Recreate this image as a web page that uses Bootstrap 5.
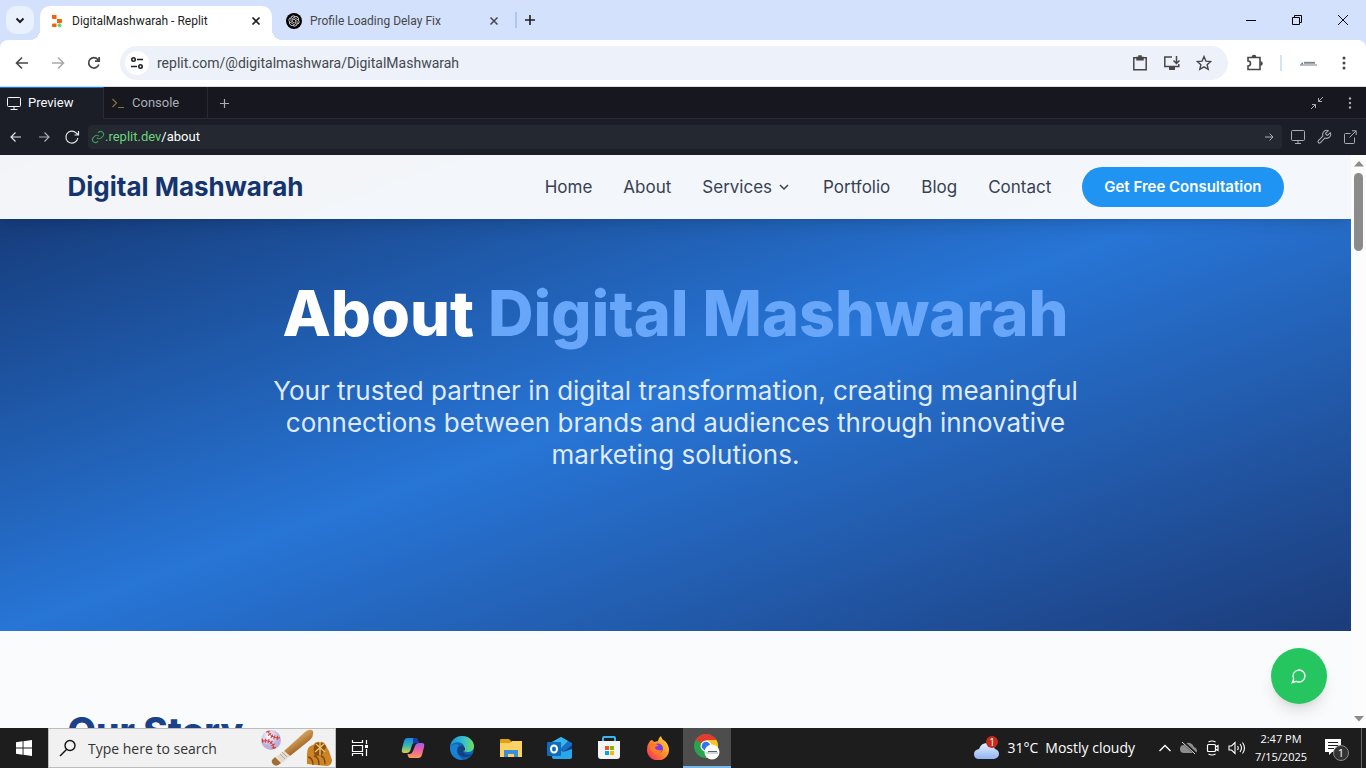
<!DOCTYPE html>
<html lang="en">
<head>
<meta charset="utf-8">
<meta name="viewport" content="width=device-width, initial-scale=1">
<title>DigitalMashwarah - Replit</title>
<link href="https://cdn.jsdelivr.net/npm/bootstrap@5.3.0/dist/css/bootstrap.min.css" rel="stylesheet">
<style>
  :root { --ui: "Open Sans", "Noto Sans", sans-serif; --site: Inter, "Open Sans", sans-serif; --ide: Roboto, "Liberation Sans", sans-serif; }
  body { font-family: var(--ui); }
  svg { display: block; flex: none; }
  .plain-btn { border: 0; background: none; padding: 0; color: inherit; display: flex; align-items: center; justify-content: center; flex: none; }
  .stroke { fill: none; stroke: currentColor; }

  .tab-strip { height: 40px; background: #d3e1fd; color: #1f1f1f; font: 12px/20px var(--ide); }
  .tab-search { width: 28px; height: 28px; border-radius: 10px; background: #e9f0fe; margin: 0 6px; }
  .browser-tab { height: 34px; position: relative; margin-top: 6px; }
  .tab-active { width: 232px; background: #fff; border-radius: 10px 10px 0 0; padding: 0 8px 5px 10px; }
  .tab-active::before, .tab-active::after { content: ""; position: absolute; bottom: 0; width: 10px; height: 10px; }
  .tab-active::before { left: -10px; background: radial-gradient(circle at 0 0, transparent 10px, #fff 10px); }
  .tab-active::after { right: -10px; background: radial-gradient(circle at 100% 0, transparent 10px, #fff 10px); }
  .tab-idle { width: 230px; padding: 0 0 5px 14px; color: #474747; }
  .tab-rule { width: 2px; height: 16px; background: #a8c7fa; margin: 0 5px 0 13px; }
  .win-btn { width: 46px; height: 40px; color: #000; }

  .toolbar-wrap { background: #d3e1fd; }
  .browser-bar { height: 47px; background: #fff; border-radius: 8px 8px 0 0; border-bottom: 1px solid #dcdcdc; color: #474747; }
  .nav-btn { width: 36px; height: 34px; }
  .nav-btn:disabled { color: #aaa; }
  .omnibox { height: 34px; border-radius: 17px; background: #ecf1fa; padding: 0 16px 0 5px; }
  .site-info { width: 24px; height: 24px; border-radius: 50%; background: #fff; color: #1f1f1f; }
  .field { border: 0; background: none; outline: 0; padding: 0; min-width: 0; }
  .url-field { font: 14px/20px var(--ide); color: #45484d; margin-left: 8px; }
  .bar-rule { width: 2px; height: 16px; background: #d3e3fd; }

  .ide-tabs { height: 32px; background: #171720; border-bottom: 1px solid #272b35; font: 13px/16px var(--ide); color: #a9adb7; }
  .ide-tab { height: 31px; width: 104px; border-right: 1px solid #272b35; padding-left: 7px; gap: 7px; }
  .ide-tab.selected { height: 32px; background: #1b1d27; border-top: 1px solid #0079f2; color: #f5f9fc; padding-bottom: 2px; }
  .ide-bar { height: 36px; background: #1b1d27; font: 13px/16px var(--ide); color: #a9adb7; }
  .ide-url { height: 24px; border-radius: 4px; background: #242830; padding: 0 6px 0 3px; }
  .ide-host { color: #6bd47c; }
  .ide-link-icon { color: #3d9a58; }
  .ide-btn { width: 28px; height: 24px; }
  .ide-lit { color: #e3e6ea; }
  .ide-tools { padding: 0 3px; }
  .ide-tools .ide-btn { width: 26px; }
  .ide-prompt { color: #837340; }

  .site-frame { min-height: 0; background: #fafbfd; font-family: var(--site); }
  .site-page { min-width: 0; }
  .site-wrap { width: 100%; max-width: 1280px; margin: 0 auto; padding: 0 32px; }
  .site-head { position: relative; z-index: 2; height: 64px; background: rgba(255,255,255,.95); box-shadow: 0 10px 15px -3px rgba(0,0,0,.1), 0 4px 6px -4px rgba(0,0,0,.1); }
  .site-logo { font-size: 26px; line-height: 32px; font-weight: 700; color: #14346e; text-decoration: none; }
  .site-nav { gap: 31px; font-size: 17px; line-height: 24px; }
  .site-nav a { color: #374151; text-decoration: none; }
  .cta { height: 40px; padding: 0 22px; background: #2094f3; color: #fff; border: 0; font-size: 15px; line-height: 20px; font-weight: 600; }
  .hero { margin-top: -64px; padding: 128px 0 160px; background: linear-gradient(to bottom right, #14346e, #2775d6, #1c3c7a); color: #fff; text-align: center; }
  .hero h1 { font-size: 63px; line-height: 60px; font-weight: 800; margin: 0 0 32px; }
  .hero h1 span { color: #68a6fa; }
  .hero p { max-width: 820px; margin: 0 auto; font-size: 26px; line-height: 32px; color: #dfeafc; }
  .story { padding-top: 80px; }
  .story h2 { font-size: 37px; line-height: 40px; font-weight: 800; color: #1a428a; margin: 0; }
  .chat-btn { position: absolute; right: 24px; bottom: 24px; width: 56px; height: 56px; border-radius: 50%; background: #25c660; color: #fff; box-shadow: 0 10px 15px -3px rgba(0,0,0,.12), 0 4px 6px -4px rgba(0,0,0,.1); }
  .scroll-rail { width: 15px; background: #fcfcfc; padding: 6px 0; color: #8b8b8b; }
  .scroll-thumb { width: 9px; height: 78px; margin-top: 6px; border-radius: 5px; background: #8b8b8b; }

  .taskbar { height: 40px; background: #1d1d1d; color: #fff; }
  .task-list { gap: 1px; }
  .task-cell { width: 48px; height: 40px; }
  .search-cell { width: 288px; height: 40px; background: #f1f1f1; border: 1px solid #bdbdbd; padding-left: 10px; color: #111; }
  .search-cell input { font-size: 14px; color: #333; margin-left: 11px; width: 160px; }
  .search-cell input::placeholder { color: #333; opacity: 1; }
  .task-on { background: #4d4d4d; border-bottom: 2px solid #76b9ed; }
  .weather { font-size: 14px; line-height: 20px; gap: 7px; margin-right: 18px; }
  .clock { width: 64px; font-size: 11px; line-height: 18px; text-align: center; white-space: nowrap; }
  .tray-cell { width: 24px; }
  .desk-edge { width: 5px; height: 40px; border-left: 1px solid #666; }
</style>
</head>
<body class="vh-100 overflow-hidden d-flex flex-column">

<!-- Browser tabs -->
<header class="tab-strip d-flex align-items-center flex-shrink-0">
  <button class="plain-btn tab-search" aria-label="Search tabs"><svg width="12" height="12" class="stroke" stroke-width="2"><path d="M2.500 4.500 6 8l3.500-3.500"/></svg></button>
  <div class="browser-tab tab-active d-flex align-items-center">
    <svg width="14" height="14" viewBox="0 0 14 14"><path fill="#f26207" d="M2 1h4.500v4H3a1 1 0 0 1-1-1zM7 5h4a1 1 0 0 1 1 1v2a1 1 0 0 1-1 1H7zM3 9.500h3.500V13H3a1 1 0 0 1-1-1v-1.500z"/><circle cx="9.500" cy="11.200" r="2" fill="#62d77b"/></svg>
    <span class="ms-2 text-nowrap">DigitalMashwarah - Replit</span>
    <button class="plain-btn ms-auto" aria-label="Close tab"><svg width="16" height="16" class="stroke" stroke-width="1.700"><path d="m4.500 4.500 7 7m0-7-7 7"/></svg></button>
  </div>
  <div class="browser-tab tab-idle d-flex align-items-center">
    <svg width="16" height="16" viewBox="0 0 16 16"><circle cx="8" cy="8" r="8"/><path fill="#fff" transform="translate(2.500 2.500) scale(.46)" d="M22.2819 9.8211a5.9847 5.9847 0 0 0-.5157-4.9108 6.0462 6.0462 0 0 0-6.5098-2.9A6.0651 6.0651 0 0 0 4.9807 4.1818a5.9847 5.9847 0 0 0-3.9977 2.9 6.0462 6.0462 0 0 0 .7427 7.0966 5.98 5.98 0 0 0 .511 4.9107 6.051 6.051 0 0 0 6.5146 2.9001A5.9847 5.9847 0 0 0 13.2599 24a6.0557 6.0557 0 0 0 5.7718-4.2058 5.9894 5.9894 0 0 0 3.9977-2.9001 6.0557 6.0557 0 0 0-.7475-7.0729zm-9.022 12.6081a4.4755 4.4755 0 0 1-2.8764-1.0408l.1419-.0804 4.7783-2.7582a.7948.7948 0 0 0 .3927-.6813v-6.7369l2.02 1.1686a.071.071 0 0 1 .038.052v5.5826a4.504 4.504 0 0 1-4.4945 4.4944zm-9.6607-4.1254a4.4708 4.4708 0 0 1-.5346-3.0137l.142.0852 4.783 2.7582a.7712.7712 0 0 0 .7806 0l5.8428-3.3685v2.3324a.0804.0804 0 0 1-.0332.0615L9.74 19.9502a4.4992 4.4992 0 0 1-6.1408-1.6464zM2.3408 7.8956a4.485 4.485 0 0 1 2.3655-1.9728V11.6a.7664.7664 0 0 0 .3879.6765l5.8144 3.3543-2.0201 1.1685a.0757.0757 0 0 1-.071 0l-4.8303-2.7865A4.504 4.504 0 0 1 2.3408 7.872zm16.5963 3.8558L13.1038 8.364 15.1192 7.2a.0757.0757 0 0 1 .071 0l4.8303 2.7913a4.4944 4.4944 0 0 1-.6765 8.1042v-5.6772a.79.79 0 0 0-.407-.667zm2.0107-3.0231l-.142-.0852-4.7735-2.7818a.7759.7759 0 0 0-.7854 0L9.409 9.2297V6.8974a.0662.0662 0 0 1 .0284-.0615l4.8303-2.7866a4.4992 4.4992 0 0 1 6.6802 4.66zM8.3065 12.863l-2.02-1.1638a.0804.0804 0 0 1-.038-.0567V6.0742a4.4992 4.4992 0 0 1 7.3757-3.4537l-.142.0805L8.704 5.459a.7948.7948 0 0 0-.3927.6813zm1.0976-2.3654l2.602-1.4998 2.6069 1.4998v2.9994l-2.5974 1.4997-2.6067-1.4997Z"/></svg>
    <span class="ms-2 text-nowrap">Profile Loading Delay Fix</span>
    <button class="plain-btn ms-auto" aria-label="Close tab"><svg width="16" height="16" class="stroke" stroke-width="1.500"><path d="m4.500 4.500 7 7m0-7-7 7"/></svg></button>
  </div>
  <span class="tab-rule"></span>
  <button class="plain-btn" aria-label="New tab"><svg width="16" height="16" class="stroke" stroke-width="1.600"><path d="M8 3v10M3 8h10"/></svg></button>
  <div class="d-flex ms-auto">
    <button class="plain-btn win-btn" aria-label="Minimize"><svg width="12" height="12" class="stroke"><path d="M1 6.500h10"/></svg></button>
    <button class="plain-btn win-btn" aria-label="Restore"><svg width="12" height="12" class="stroke"><path d="M1.500 3.500h7v7h-7zM3.500 3.500v-2h7v7h-2"/></svg></button>
    <button class="plain-btn win-btn" aria-label="Close"><svg width="12" height="12" class="stroke"><path d="m1 1 10 10m0-10L1 11"/></svg></button>
  </div>
</header>

<!-- Browser toolbar -->
<div class="toolbar-wrap flex-shrink-0">
<div class="browser-bar d-flex align-items-center ps-1">
  <button class="plain-btn nav-btn" aria-label="Back"><svg width="16" height="16" class="stroke" stroke-width="1.600"><path d="M14 8H3M8 2.500 2.500 8 8 13.500"/></svg></button>
  <button class="plain-btn nav-btn" aria-label="Forward" disabled><svg width="16" height="16" class="stroke" stroke-width="1.600"><path d="M2 8h11M8 2.500 13.500 8 8 13.500"/></svg></button>
  <button class="plain-btn nav-btn" aria-label="Reload"><svg width="16" height="16" class="stroke" stroke-width="1.700"><path d="M12.800 9.500A5.200 5.200 0 1 1 11.900 4.500L13 6M13.200 2v4.200H9"/></svg></button>
  <div class="omnibox d-flex align-items-center flex-grow-1 ms-2">
    <button class="plain-btn site-info" aria-label="Site information"><svg width="14" height="14" class="stroke" stroke-width="1.600"><circle cx="3.500" cy="3.500" r="1.700"/><path d="M7 3.500h6M1 10.500h6"/><circle cx="10.500" cy="10.500" r="1.700"/></svg></button>
    <input class="field url-field flex-grow-1" aria-label="Address" value="replit.com/@digitalmashwara/DigitalMashwarah">
    <div class="d-flex gap-3 align-items-center">
      <button class="plain-btn" aria-label="Clipboard"><svg width="16" height="16" class="stroke" stroke-width="1.500"><path d="M1.800 2.800h12.400v12H1.800z"/><path fill="currentColor" d="M5 2.500h6v2.300H5zM7 1h2v2H7z"/></svg></button>
      <button class="plain-btn" aria-label="Install app"><svg width="16" height="16" viewBox="1 0 16 16" class="stroke" stroke-width="1.500"><path d="M9 2H1.800v9.500h14V9M13.500 1v7M10.500 5.500l3 3 3-3"/><path d="M6 13.500h6" stroke-width="3"/></svg></button>
      <button class="plain-btn" aria-label="Bookmark this page"><svg width="16" height="16" class="stroke" stroke-width="1.400"><path d="m8 1.600 1.900 4.500 4.800.4-3.600 3.200 1.100 4.700L8 11.900l-4.200 2.500 1.100-4.700-3.600-3.200 4.800-.4z"/></svg></button>
    </div>
  </div>
  <button class="plain-btn ms-3" aria-label="Extensions"><svg width="20" height="18" class="stroke" stroke-width="1.600"><path d="M4 3.500h12v12H4v-3.500a2.300 2.300 0 0 0 0-5z"/><path d="M8.500 3a1.500 1.500 0 0 1 3 0M16.500 8a1.500 1.500 0 0 1 0 3" fill="currentColor"/></svg></button>
  <span class="bar-rule mx-3"></span>
  <button class="plain-btn" aria-label="Profile"><svg width="20" height="16"><path d="M2 9.500 5 7v3z" fill="#5f7f9a"/><path d="M6 7.500h11M2 10h17" stroke="#a3aab2" stroke-width="1.600"/><path d="M6 8h11" stroke="#5b6470"/></svg></button>
  <button class="plain-btn mx-3" aria-label="Browser menu"><svg width="16" height="16" fill="currentColor"><circle cx="10" cy="3" r="1.500"/><circle cx="10" cy="8" r="1.500"/><circle cx="10" cy="13" r="1.500"/></svg></button>
</div>
</div>

<!-- Workspace panes -->
<div class="ide-tabs d-flex flex-shrink-0">
  <button class="plain-btn ide-tab selected justify-content-start"><svg width="14" height="14" class="stroke"><path d="M1.500 1.500h11a1 1 0 0 1 1 1v7a1 1 0 0 1-1 1h-11a1 1 0 0 1-1-1v-7a1 1 0 0 1 1-1zM7 10.500v3M3.500 13.500h7"/></svg>Preview</button>
  <button class="plain-btn ide-tab justify-content-start"><svg width="14" height="12" class="stroke ide-prompt" stroke-width="1.200"><path d="m1.500 2 4 4-4 4M7 10.500h6"/></svg>Console</button>
  <button class="plain-btn ms-2" aria-label="New pane"><svg width="16" height="16" class="stroke" stroke-width="1.200"><path d="M8.500 4v9M4 8.500h9"/></svg></button>
  <button class="plain-btn ms-auto" aria-label="Collapse"><svg width="14" height="14" class="stroke"><path d="M13 1 8.500 5.500M8.500 2v3.500H12M1 13l4.500-4.500M2 8.500h3.500V12"/></svg></button>
  <button class="plain-btn ms-3 me-2" aria-label="Pane menu"><svg width="18" height="14" fill="currentColor"><circle cx="10" cy="2.500" r="1.200"/><circle cx="10" cy="7" r="1.200"/><circle cx="10" cy="11.500" r="1.200"/></svg></button>
</div>
<div class="ide-bar d-flex align-items-center flex-shrink-0">
  <button class="plain-btn ide-btn ide-lit ps-1" aria-label="Back"><svg width="12" height="12" class="stroke" stroke-width="1.200"><path d="M11 6H1m4.500-4.500L1 6l4.500 4.500"/></svg></button>
  <button class="plain-btn ide-btn ps-1" aria-label="Forward"><svg width="12" height="12" class="stroke" stroke-width="1.200"><path d="M1 6h10M6.500 1.500 11 6l-4.500 4.500"/></svg></button>
  <button class="plain-btn ide-btn ide-lit ps-1" aria-label="Reload"><svg width="16" height="16" class="stroke" stroke-width="1.200"><path d="M13.800 9A6 6 0 1 1 12 3.800L14.500 6M14.500 2v4h-4"/></svg></button>
  <div class="ide-url d-flex align-items-center flex-grow-1 ms-1">
    <svg width="14" height="14" viewBox="0 0 24 24" class="stroke ide-link-icon" stroke-width="2"><path d="M10 13a5 5 0 0 0 7.500.5l3-3a5 5 0 0 0-7-7L12 5M14 11a5 5 0 0 0-7.500-.5l-3 3a5 5 0 0 0 7 7L12 19"/></svg>
    <a class="text-decoration-none text-white flex-grow-1" href="#"><span class="ide-host">.replit.dev</span>/about</a>
    <button class="plain-btn" aria-label="Go"><svg width="14" height="12" class="stroke"><path d="M3 6h8M7.500 2.500 11 6 7.500 9.500"/></svg></button>
  </div>
  <div class="ide-tools d-flex">
    <button class="plain-btn ide-btn" aria-label="Device size"><svg width="16" height="14" class="stroke"><path d="M2.500.5h11a1 1 0 0 1 1 1v8a1 1 0 0 1-1 1h-11a1 1 0 0 1-1-1v-8a1 1 0 0 1 1-1zM8 10.500v3M5 13.500h6"/></svg></button>
    <button class="plain-btn ide-btn" aria-label="Tools"><svg width="16" height="16" viewBox="0 0 24 24" class="stroke" stroke-width="1.600"><path d="M14.700 6.300a1 1 0 0 0 0 1.400l1.600 1.600a1 1 0 0 0 1.400 0l3.770-3.770a6 6 0 0 1-7.940 7.940l-6.910 6.910a2.120 2.120 0 0 1-3-3l6.910-6.910a6 6 0 0 1 7.940-7.940z"/></svg></button>
    <button class="plain-btn ide-btn" aria-label="Open in new tab"><svg width="14" height="14" class="stroke"><path d="M11.500 7.500v5a1 1 0 0 1-1 1h-8a1 1 0 0 1-1-1v-8a1 1 0 0 1 1-1h5M9 .8h4.200V5M13 1 6.500 7.500"/></svg></button>
  </div>
</div>

<!-- Previewed site -->
<div class="site-frame d-flex flex-grow-1 overflow-hidden position-relative">
  <main class="site-page flex-grow-1 overflow-hidden position-relative">
    <div class="site-head">
      <div class="site-wrap h-100 d-flex align-items-center justify-content-between">
        <a class="site-logo" href="#">Digital Mashwarah</a>
        <nav class="site-nav d-flex align-items-center">
          <a href="#">Home</a>
          <a href="#">About</a>
          <a href="#" class="d-flex align-items-center gap-1">Services<svg width="16" height="16" class="stroke" stroke-width="1.500"><path d="m4 6 4 4 4-4"/></svg></a>
          <a href="#">Portfolio</a>
          <a href="#">Blog</a>
          <a href="#">Contact</a>
          <button class="btn cta rounded-pill">Get Free Consultation</button>
        </nav>
      </div>
    </div>
    <section class="hero">
      <h1>About <span>Digital Mashwarah</span></h1>
      <p>Your trusted partner in digital transformation, creating meaningful connections between brands and audiences through innovative marketing solutions.</p>
    </section>
    <section class="story"><div class="site-wrap"><h2>Our Story</h2></div></section>
    <button class="plain-btn chat-btn" aria-label="Chat"><svg width="16" height="16" viewBox="0 0 24 24" class="stroke" stroke-width="2"><path d="M7.900 20A9 9 0 1 0 4 16.100L2 22Z"/></svg></button>
  </main>
  <div class="scroll-rail d-flex flex-column align-items-center flex-shrink-0">
    <svg width="10" height="6" fill="currentColor"><path d="M0 5.500 5 0l5 5.500z"/></svg>
    <div class="scroll-thumb"></div>
    <svg class="mt-auto" width="10" height="6" fill="currentColor"><path d="M0 0h10L5 5.500z"/></svg>
  </div>
</div>

<!-- Taskbar -->
<footer class="taskbar d-flex align-items-center flex-shrink-0">
  <button class="plain-btn task-cell" aria-label="Start"><svg width="16" height="16" fill="#fff"><path d="M0 2.300 6.600 1.300v6.200H0zM7.500 1.200 16 0v7.500H7.500zM0 8.400h6.600v6.300L0 13.700zM7.500 8.400H16V16l-8.500-1.200z"/></svg></button>
  <div class="search-cell d-flex align-items-center">
    <svg width="18" height="18" class="stroke" stroke-width="1.400"><circle cx="11" cy="6.500" r="5"/><path d="M7.500 10.500 1 17"/></svg>
    <input class="field" aria-label="Search" placeholder="Type here to search">
    <svg width="76" height="38" class="ms-auto" viewBox="0 0 76 38">
      <defs><linearGradient id="wood" x1=".3" x2=".6" y1=".3" y2=".7"><stop stop-color="#dcae66"/><stop offset="1" stop-color="#a4662a"/></linearGradient><radialGradient id="ball" cx=".4" cy=".3"><stop offset="0" stop-color="#fff"/><stop offset="1" stop-color="#bdb0dc"/></radialGradient></defs>
      <circle cx="12" cy="11" r="10" fill="url(#ball)"/>
      <path d="M9 2q2 7 12 7M3 12q11-2 12 8" fill="none" stroke="#d33a2c" stroke-width="1"/><path d="M9 2q2 7 12 7M3 12q11-2 12 8" fill="none" stroke="#d33a2c" stroke-width="4" stroke-dasharray="1 2"/>
      <path d="M46 3q5-4 8-1 1 5-3 9L31 27l-6-5z" fill="url(#wood)"/>
      <path d="m25 22 6 5-8 7-6-6z" fill="#e2dacd"/><path d="m21 25 5 5m-3-7 5 5" stroke="#b9aa96"/><path d="m16 28 6 6q-4 4-7 2t-2-5z" fill="#a36c33"/>
      <path d="M48 35V25q0-8 6-9 3-4 7-3 3-1 5 2l4 7 3 9q0 6-6 6z" fill="#cc8424"/><path d="M57 14q9-1 10 4l-4 8-7 1q-3-8 1-13z" fill="#8a4f16"/><path d="m57 15 9 8m-10 0 9-8m-4-2v13" stroke="#edc16b" stroke-width="1.400"/><path d="M49 28q5 1 5 8m1-9q5 1 5 9m2-9q4 1 4 8" fill="none" stroke="#7c470b" stroke-width="1.300"/>
    </svg>
  </div>
  <div class="task-list d-flex">
    <button class="plain-btn task-cell me-1" aria-label="Task view"><svg width="18" height="16" class="stroke"><path d="M1.500 5.500h10v6h-10zM1.500 0v2.500h10V0M1.500 16v-2.500h10V16M15.500 0v4M15.500 9v7" stroke-width="1.200"/><path d="M14 5h3v3h-3z" fill="#fff" stroke="none"/></svg></button>
    <button class="plain-btn task-cell" aria-label="Copilot"><svg width="24" height="22" viewBox="0 0 24 22"><defs><linearGradient id="cpa" x1="0" y1="0" x2="0" y2="1"><stop stop-color="#1b86e5"/><stop offset=".5" stop-color="#35b8b0"/><stop offset="1" stop-color="#d8d33a"/></linearGradient><linearGradient id="cpb" x1="0" y1="0" x2="0" y2="1"><stop stop-color="#a35ce8"/><stop offset=".5" stop-color="#f062a0"/><stop offset="1" stop-color="#fb9b58"/></linearGradient></defs><path d="M6 1h8q2 0 2.500 4H14q-2 0-3 3l-1.500 5q-1 3-4 3H3q-3 0-2-4l2-8q1-3 3-3z" fill="url(#cpa)"/><path d="M12 1h3q2 0 3 5h-4q-1 0-2 2z" fill="#153ea8"/><path d="M18 21H9q-2 0-2.500-4H9q2 0 3-3l2-5q1-3 4-3h3q3 0 2 4l-2 8q-1 3-3 3z" fill="url(#cpb)"/></svg></button>
    <button class="plain-btn task-cell" aria-label="Edge"><svg width="24" height="24" viewBox="0 0 24 24"><defs><linearGradient id="edg" x1="0" x2="1"><stop stop-color="#1a91dc"/><stop offset=".6" stop-color="#39c2c9"/><stop offset="1" stop-color="#70df54"/></linearGradient></defs><circle cx="12" cy="12" r="12" fill="#0f62b5"/><path d="M0 11C1 4 6 0 12 0c7 0 12 5 12 10 0 4-3 6-6 6-3 0-5-1-5-2s2-1 1-4C12 5 3 5 0 11z" fill="url(#edg)"/><path d="M9 11c-3 3-1 10 6 10 3 0 6-1 7-3-5 2-9 0-9-4 0-1 1-1 1-3q-2-3-5 0z" fill="#14407f"/><path d="M13 14q1-1 1-3 2 2 0 4z" fill="#1d1d1d"/><path d="M9 9q-6 7 4 15C5 24 0 19 0 11q4-5 9-2z" fill="#1982d3"/><path d="M24 17.500q-1 2-3 4l4-1z" fill="#1d1d1d"/></svg></button>
    <button class="plain-btn task-cell" aria-label="File Explorer"><svg width="22" height="18"><path d="M0 1q0-1 1-1h8l2 2v3H0z" fill="#e0a014"/><path d="M0 4h10l2-2h10v16H0z" fill="#fdd265"/><path d="M4 18v-7h14v7h-4v-3H8v3z" fill="#3b8fd3"/></svg></button>
    <button class="plain-btn task-cell" aria-label="Outlook"><svg width="26" height="24" viewBox="0 0 26 24"><path d="M5 6 14 1l11 6v15H5z" fill="#1b6fc3"/><path d="M5 6 14 1l7 4-9 9z" fill="#35b6ef"/><path d="m8 11 8 5 9-7v12q0 2-2 2H7q-2 0-2-2z" fill="#28a8ea"/><path d="m16 16 9-7v4z" fill="#103f91"/><rect y="6" width="14" height="14" rx="1" fill="#0f6cbd"/><ellipse cx="7" cy="13" rx="3" ry="3.500" fill="none" stroke="#fff" stroke-width="2"/></svg></button>
    <button class="plain-btn task-cell" aria-label="Microsoft Store"><svg width="24" height="24"><path d="M6 6V2q0-1 1-1h10q1 0 1 1v4" fill="none" stroke="#39b6ed" stroke-width="2"/><path d="M1 5h22v15q0 3-3 3H4q-3 0-3-3z" fill="#f4f4f4"/><path d="M8 10h4v4H8z" fill="#f25022"/><path d="M13 10h4v4h-4z" fill="#7fba00"/><path d="M8 15h4v4H8z" fill="#00a4ef"/><path d="M13 15h4v4h-4z" fill="#ffb900"/></svg></button>
    <button class="plain-btn task-cell" aria-label="Firefox"><svg width="24" height="24" viewBox="0 0 24 24"><defs><linearGradient id="ffx" x1="1" y1="0" x2="0" y2="1"><stop stop-color="#ffe63d"/><stop offset=".5" stop-color="#ff8a27"/><stop offset="1" stop-color="#f51d6b"/></linearGradient></defs><path d="M5 4q2 0 3 2l4-1q0-3 3-5 1 4 4 5 4 4 4 9a11 10.500 0 0 1-22 0Q1 8 5 4z" fill="url(#ffx)"/><circle cx="12" cy="12.500" r="5" fill="#7a3ee0"/><path d="M4 9q5-3 9 1-4 0-4 2 2 3 7 2-2 5-7 4-5-3-5-9z" fill="#ff7a2a"/></svg></button>
    <button class="plain-btn task-cell task-on" aria-label="Chrome"><svg width="26" height="26" viewBox="0 0 26 26"><circle cx="12" cy="12" r="12" fill="#2ba24c"/><path d="M12 12 1.600 6a12 12 0 0 1 20.800 0z" fill="#e33b2e"/><path d="M12 6h10.400A12 12 0 0 1 12 24l5-9z" fill="#fcc31e"/><circle cx="12" cy="12" r="5.500" fill="#fff"/><circle cx="12" cy="12" r="4.300" fill="#3276e8"/><circle cx="18" cy="18" r="7.500" fill="#fff"/><path d="M14 17.500h9" stroke="#56616f"/><path d="M12 19h12" stroke="#a3aab2"/></svg></button>
  </div>
  <div class="d-flex align-items-center ms-auto">
    <div class="weather d-flex align-items-center text-nowrap">
      <svg width="26" height="26" viewBox="0 0 26 26"><defs><linearGradient id="cld" x1="0" y1="0" x2="0" y2="1"><stop stop-color="#e6f0ff"/><stop offset="1" stop-color="#91b4f1"/></linearGradient></defs><path d="M5 24q-5 0-5-5 0-4 5-5 2-6 8-6t8 6q4 1 4 5t-5 5z" fill="url(#cld)"/><circle cx="18" cy="7" r="6" fill="#c42b1c"/><text x="18" y="11" font-size="10" fill="#fff" text-anchor="middle">1</text></svg>
      <span>31°C</span><span>Mostly cloudy</span>
    </div>
    <button class="plain-btn tray-cell" aria-label="Hidden icons"><svg width="12" height="12" class="stroke" stroke-width="1.300"><path d="m.5 9 5.500-5.500L11.500 9"/></svg></button>
    <button class="plain-btn tray-cell" aria-label="OneDrive"><svg width="18" height="14"><path d="M4 12q-4 0-4-4t4-4q2-3 6-2 3 1 4 4 3 1 3 4 0 2-3 2z" fill="#8d8d8d"/><path d="m2 0 14 13" stroke="#1d1d1d" stroke-width="3"/><path d="m2 1 13 12" stroke="#ddd"/></svg></button>
    <button class="plain-btn tray-cell" aria-label="Meet now"><svg width="14" height="16" class="stroke" stroke-width="1.200"><path d="M2.500 4.500h6q1 0 1 1v5q0 1-1 1h-6q-1 0-1-1v-5q0-1 1-1zM9.500 7l2.500-1.500v5L9.500 9M2.500 2q3.500-2 7 0M2.500 14q3.500 2 7 0"/></svg></button>
    <button class="plain-btn tray-cell" aria-label="Volume"><svg width="18" height="14" class="stroke" stroke-width="1.100"><path d="M1 5h2.500L7 1.500v11L3.500 9H1zM9.500 5q1.500 2 0 4M12 3q3 4 0 8M14.500 1.500q4 5.500 0 11"/></svg></button>
    <div class="clock">2:47 PM<br>7/15/2025</div>
    <button class="plain-btn task-cell" aria-label="Notifications"><svg width="26" height="26" viewBox="0 0 26 26"><path d="M1 4h16v13H8l-3 3v-3H1z" fill="#fff"/><path d="M4 7.500h10M4 10.500h10M4 13.500h6" stroke="#1d1d1d"/><circle cx="17" cy="18" r="7.500" fill="#333" stroke="#888"/><text x="17" y="22" font-size="11" fill="#fff" text-anchor="middle">1</text></svg></button>
    <span class="desk-edge"></span>
  </div>
</footer>
<script src="https://cdn.jsdelivr.net/npm/bootstrap@5.3.0/dist/js/bootstrap.bundle.min.js"></script>
</body>
</html>
